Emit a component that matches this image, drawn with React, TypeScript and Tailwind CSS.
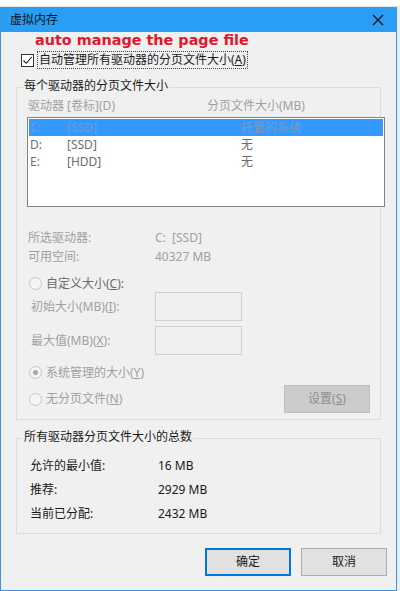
import React from 'react';

const font = { fontFamily: '"Noto Sans", "Noto Sans CJK SC", sans-serif' };

const Radio = ({ checked }: { checked?: boolean }) => (
  <span className="flex h-[13px] w-[13px] items-center justify-center rounded-full border border-[#c6c6c6] bg-[#f4f4f4]">
    {checked && <span className="h-[5px] w-[5px] rounded-full bg-[#a8a8a8]" />}
  </span>
);

const drives = [
  { d: 'C:', label: '[SSD]', size: '托管的系统', selected: true },
  { d: 'D:', label: '[SSD]', size: '无' },
  { d: 'E:', label: '[HDD]', size: '无' },
];

const totals = [
  { name: '允许的最小值:', value: '16 MB' },
  { name: '推荐:', value: '2929 MB' },
  { name: '当前已分配:', value: '2432 MB' },
];

export default function App() {
  return (
    <div className="flex h-[591px] w-[400px] flex-col bg-white text-[12px] leading-none text-[#1a1a1a]" style={font}>
      {/* window behind the dialog */}
      <div className="h-[7px] shrink-0 overflow-hidden border-b border-[#e6e6e6] bg-white" />

      <div className="flex min-h-0 flex-1">
        <div className="flex w-[397px] flex-col border-x border-b border-[#3f93dd] bg-[#f0f0f0]">
          {/* Title bar */}
          <div className="flex h-[25px] shrink-0 items-center justify-between bg-[#2a9df4] pl-[9px] pr-[12px]">
            <span className="text-[12px] text-[#111]">虚拟内存</span>
            <svg width="12" height="12" viewBox="0 0 12 12" className="text-[#111]">
              <path d="M1 1L11 11M11 1L1 11" stroke="currentColor" strokeWidth="1.1" />
            </svg>
          </div>

          <div className="flex flex-1 flex-col px-[15px]">
            {/* annotation */}
            <div className="pl-[19px] text-[14.4px] font-bold leading-[16px] text-[#e3162c]" style={{ fontFamily: '"DejaVu Sans", "Noto Sans", sans-serif' }}>
              auto manage the page file
            </div>

            {/* auto-manage checkbox */}
            <div className="mt-[3px] flex items-center pl-[5px]">
              <span className="flex h-[13px] w-[13px] items-center justify-center border border-[#333] bg-white">
                <svg width="11" height="11" viewBox="0 0 11 11">
                  <path d="M1.5 5.5L4.2 8.3L9.8 2" fill="none" stroke="#1a1a1a" strokeWidth="1.1" />
                </svg>
              </span>
              <span className="ml-[3px] border border-dotted border-[#444] px-[1px] py-[2px]">
                自动管理所有驱动器的分页文件大小(<u>A</u>)
              </span>
            </div>

            {/* Per-drive group */}
            <div className="relative mt-[18px] rounded-[1px] border border-[#dcdcdc] pb-[6px]">
              <span className="absolute -top-[8px] left-[6px] bg-[#f0f0f0] px-[1px] text-[12px] text-[#1a1a1a]">每个驱动器的分页文件大小</span>

              <div className="flex flex-col px-[10px] pt-[12px] text-[#a0a0a0]">
                <div className="flex">
                  <span className="w-[180px] pl-[1px]">驱动器 [卷标](D)</span>
                  <span>分页文件大小(MB)</span>
                </div>

                {/* list box */}
                <div className="mt-[5px] h-[90px] w-[358px] border border-[#828282] bg-white p-[1px]">
                  {drives.map((r) => (
                    <div
                      key={r.d}
                      className={`flex h-[17px] items-center pl-[1px] ${r.selected ? 'bg-[#3399ff] text-[#7a98c0]' : 'text-[#6d6d6d]'}`}
                    >
                      <span className="w-[37px]">{r.d}</span>
                      <span className="w-[174px]">{r.label}</span>
                      <span>{r.size}</span>
                    </div>
                  ))}
                </div>

                <div className="mt-[25px] flex flex-col gap-[7px] pl-[1px]">
                  <div className="flex">
                    <span className="w-[127px]">所选驱动器:</span>
                    <span>C:&nbsp;&nbsp;[SSD]</span>
                  </div>
                  <div className="flex">
                    <span className="w-[127px]">可用空间:</span>
                    <span>40327 MB</span>
                  </div>
                </div>

                <div className="mt-[14px] flex items-center gap-[4px] pl-[2px] text-[#6a6a6a]">
                  <Radio />
                  <span>自定义大小(<u>C</u>):</span>
                </div>

                <div className="mt-[2px] flex items-center pl-[4px]">
                  <span className="w-[124px]">初始大小(MB)(<u>I</u>):</span>
                  <span className="h-[29px] w-[87px] border border-[#cfcfcf] bg-[#f0f0f0]" />
                </div>
                <div className="mt-[5px] flex items-center pl-[4px]">
                  <span className="w-[124px]">最大值(MB)(<u>X</u>):</span>
                  <span className="h-[29px] w-[87px] border border-[#cfcfcf] bg-[#f0f0f0]" />
                </div>

                <div className="mt-[11px] flex items-center gap-[4px] pl-[2px]">
                  <Radio checked />
                  <span>系统管理的大小(<u>Y</u>)</span>
                </div>
                <div className="mt-[6px] flex items-center justify-between pl-[2px]">
                  <div className="flex items-center gap-[4px]">
                    <Radio />
                    <span>无分页文件(<u>N</u>)</span>
                  </div>
                  <span className="flex h-[28px] w-[86px] items-center justify-center border border-[#bfbfbf] bg-[#cccccc] text-[#8c8c8c]">
                    设置(<u>S</u>)
                  </span>
                </div>
              </div>
            </div>

            {/* Totals group */}
            <div className="relative mt-[18px] rounded-[1px] border border-[#dcdcdc] pb-[13px]">
              <span className="absolute -top-[8px] left-[6px] bg-[#f0f0f0] px-[1px]">所有驱动器分页文件大小的总数</span>
              <div className="flex flex-col gap-[12px] pl-[13px] pt-[21px]">
                {totals.map((t) => (
                  <div key={t.name} className="flex">
                    <span className="w-[128px]">{t.name}</span>
                    <span>{t.value}</span>
                  </div>
                ))}
              </div>
            </div>

            {/* Buttons */}
            <div className="mt-[14px] mr-[-6px] flex justify-end gap-[10px]">
              <button className="flex h-[28px] w-[86px] items-center justify-center border-2 border-[#0078d7] bg-[#e1e1e1] text-[#1a1a1a]">
                确定
              </button>
              <button className="flex h-[28px] w-[86px] items-center justify-center border border-[#adadad] bg-[#e1e1e1] text-[#1a1a1a]">
                取消
              </button>
            </div>
          </div>
        </div>
        <div className="flex-1 bg-[#e9eef3]" />
      </div>
    </div>
  );
}
